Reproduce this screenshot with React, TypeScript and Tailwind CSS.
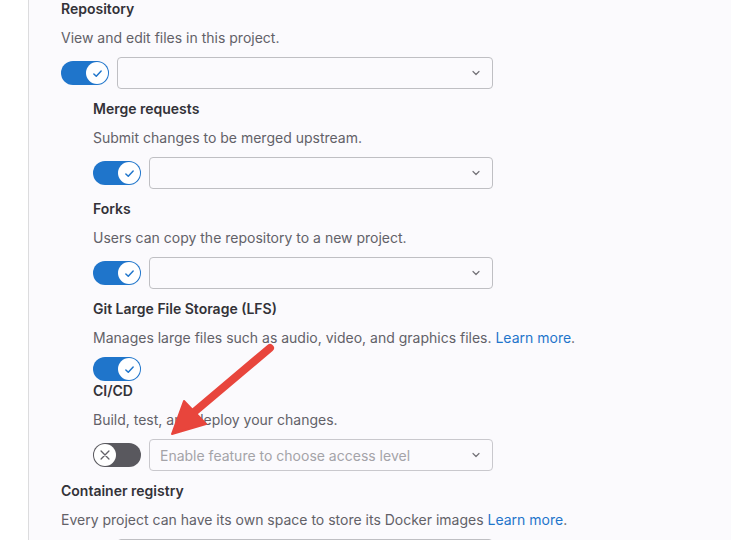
import React from 'react';

const CheckIcon = () => (
    <svg width="13" height="13" viewBox="0 0 16 16" fill="none">
        <path d="M3.5 8.5l3 3 6-6.5" stroke="#1f75cb" strokeWidth="1.8" strokeLinecap="round" strokeLinejoin="round" />
    </svg>
);

const CloseIcon = () => (
    <svg width="14" height="14" viewBox="0 0 16 16" fill="none">
        <path d="M3.5 3.5l9 9M12.5 3.5l-9 9" stroke="#626168" strokeWidth="1.5" strokeLinecap="round" />
    </svg>
);

const Toggle: React.FC<{ on?: boolean }> = ({ on = true }) => (
    <div
        className={`flex h-6 w-12 shrink-0 items-center rounded-full px-[1px] ${
            on ? 'justify-end bg-[#1f75cb]' : 'justify-start bg-[#59585e]'
        }`}
    >
        <span className="flex h-[22px] w-[22px] items-center justify-center rounded-full bg-white">
            {on ? <CheckIcon /> : <CloseIcon />}
        </span>
    </div>
);

const Chevron = () => (
    <svg width="12" height="12" viewBox="0 0 16 16" fill="none">
        <path d="M4 6l4 4 4-4" stroke="#737278" strokeWidth="1.6" strokeLinecap="round" strokeLinejoin="round" />
    </svg>
);

const Select: React.FC<{ width: string; placeholder?: string; disabled?: boolean }> = ({ width, placeholder, disabled }) => (
    <div
        className={`flex h-8 items-center justify-between rounded-[4px] border bg-[#fbfafd] pl-[10px] pr-[10px] ${width} ${
            disabled ? 'border-[#c9c8cd]' : 'border-[#bfbfc3]'
        }`}
    >
        <span className="text-[14px] text-[#a4a3a8]">{placeholder}</span>
        <Chevron />
    </div>
);

const Heading: React.FC<{ children: React.ReactNode; className?: string }> = ({ children, className = '' }) => (
    <p className={`h-5 text-[14px] font-semibold leading-5 text-[#333238] ${className}`}>{children}</p>
);

const Desc: React.FC<{ children: React.ReactNode }> = ({ children }) => (
    <p className="mt-[9px] h-5 text-[14px] leading-5 text-[#626168]">{children}</p>
);

const LearnMore = () => <span className="text-[#1f75cb]">Learn more</span>;

export default function App() {
    return (
        <div
            className="relative flex h-[540px] w-full overflow-hidden bg-white"
            style={{ fontFamily: 'Inter, "Noto Sans", sans-serif' }}
        >
            <div className="w-[28px] shrink-0 bg-white" />
            <div className="flex-1 border-l border-[#dcdcde] bg-[#fbfafd] pl-[32px]">
                <div className="mt-[-1px]">
                    <Heading>Repository</Heading>
                    <Desc>View and edit files in this project.</Desc>
                    <div className="mt-[9px] flex items-center gap-2">
                        <Toggle />
                        <Select width="w-[376px]" />
                    </div>

                    <div className="pl-8">
                        <Heading className="mt-[10px]">Merge requests</Heading>
                        <Desc>Submit changes to be merged upstream.</Desc>
                        <div className="mt-[9px] flex items-center gap-2">
                            <Toggle />
                            <Select width="w-[344px]" />
                        </div>

                        <Heading className="mt-[10px]">Forks</Heading>
                        <Desc>Users can copy the repository to a new project.</Desc>
                        <div className="mt-[9px] flex items-center gap-2">
                            <Toggle />
                            <Select width="w-[344px]" />
                        </div>

                        <Heading className="mt-[10px]">Git Large File Storage (LFS)</Heading>
                        <Desc>
                            Manages large files such as audio, video, and graphics files. <LearnMore />.
                        </Desc>
                        <div className="mt-[9px] flex items-center">
                            <Toggle />
                        </div>

                        <Heading>CI/CD</Heading>
                        <Desc>Build, test, and deploy your changes.</Desc>
                        <div className="mt-[9px] flex items-center gap-2">
                            <Toggle on={false} />
                            <Select width="w-[344px]" placeholder="Enable feature to choose access level" disabled />
                        </div>
                    </div>

                    <Heading className="mt-[10px]">Container registry</Heading>
                    <Desc>
                        Every project can have its own space to store its Docker images <LearnMore />.
                    </Desc>
                    <div className="mt-[9px] flex items-center gap-2">
                        <div className="w-12" />
                        <Select width="w-[376px]" />
                    </div>
                </div>
            </div>

            <svg className="pointer-events-none absolute left-0 top-0" width="731" height="540" viewBox="0 0 731 540">
                <line x1="270" y1="348" x2="193" y2="413" stroke="#e8453c" strokeWidth="8" strokeLinecap="round" />
                <path d="M172 434 L184 401 L206 424 Z" fill="#e8453c" stroke="#e8453c" strokeWidth="2" strokeLinejoin="round" />
            </svg>
        </div>
    );
}
